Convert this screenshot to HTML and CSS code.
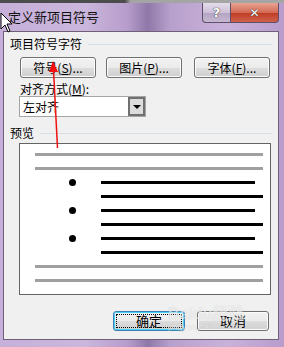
FILE: index.html
```html
<!DOCTYPE html>
<html lang="zh-CN">
  <head>
    <meta charset="UTF-8" />
    <title>定义新项目符号</title>
    <link rel="stylesheet" href="styles.css">
  </head>
  <body>
    <div class="window">
      <div class="top-strip"></div>
      <div class="titlebar">
        <span class="title">定义新项目符号</span>
        <div class="caption-btns">
          <div class="cap help">?</div>
          <div class="cap close">✕</div>
        </div>
      </div>

      <div class="client">
        <div class="group-head">
          <span>项目符号字符</span>
          <div class="rule"></div>
        </div>

        <div class="btn-row">
          <button class="btn">符号(<u>S</u>)...</button>
          <button class="btn">图片(<u>P</u>)...</button>
          <button class="btn">字体(<u>F</u>)...</button>
        </div>

        <div class="field-label">对齐方式(<u>M</u>):</div>
        <div class="select">
          <span class="select-value">左对齐</span>
          <span class="select-drop"><span class="tri"></span></span>
        </div>

        <div class="group-head preview-head">
          <span>预览</span>
          <div class="rule"></div>
        </div>

        <div class="preview">
          <div class="pline gray"></div>
          <div class="pline gray"></div>
          <div class="item">
            <span class="dot"></span>
            <div class="pline black short"></div>
          </div>
          <div class="pline black long"></div>
          <div class="item">
            <span class="dot"></span>
            <div class="pline black short"></div>
          </div>
          <div class="pline black long"></div>
          <div class="item">
            <span class="dot"></span>
            <div class="pline black short"></div>
          </div>
          <div class="pline black long"></div>
          <div class="pline gray"></div>
          <div class="pline gray"></div>
        </div>

        <div class="footer">
          <button class="btn ok"><span class="focus">确定</span></button>
          <button class="btn cancel">取消</button>
        </div>
      </div>

      <div class="watermark">
        <span class="wm-big">Baidu经验</span>
        <span class="wm-small">jingyan.baidu.com</span>
      </div>

      <svg class="cursor" width="14" height="22" viewBox="0 0 14 22">
        <polygon points="1,1 1,17 5,13 8,20 10,19 7,12 12,12" fill="#fff" stroke="#000" stroke-width="1" />
      </svg>

      <svg class="arrow" width="284" height="347" viewBox="0 0 284 347">
        <line x1="57.5" y1="148" x2="53.5" y2="70" stroke="#f01010" stroke-width="1.5" />
        <polygon points="53,61 49,72 58,72" fill="#f01010" />
      </svg>
    </div>
  </body>
</html>
```

FILE: styles.css
```css
body {
  margin: 0;
  padding: 0;
  font-family: "Noto Sans CJK SC", "Noto Sans", sans-serif;
  font-size: 12px;
  color: #000;
}

.window {
  position: relative;
  width: 284px;
  height: 347px;
  overflow: hidden;
  background: linear-gradient(90deg, #c6b0da 0%, #cbb6dc 30%, #b69ccb 45%, #8f78a8 52%, #b8a0cc 60%, #c9b2da 80%, #b89ccc 100%);
}

.top-strip {
  height: 3px;
  background: linear-gradient(90deg, #4c4c4c 0%, #4c4c4c 44%, #a5a5a5 46%, #a5a5a5 100%);
}

.titlebar {
  height: 28px;
  display: flex;
  justify-content: space-between;
  align-items: flex-start;
}

.title {
  margin: 5px 0 0 8px;
  font-size: 13px;
  line-height: 18px;
  color: #111;
}

.caption-btns {
  display: flex;
  margin-right: 5px;
}

.cap {
  height: 19px;
  display: flex;
  align-items: center;
  justify-content: center;
  color: #fff;
  font-weight: bold;
  font-family: "DejaVu Sans", sans-serif;
  border: 1px solid #5d4f6a;
  border-top: none;
  text-shadow: 0 0 1px #333, 0 0 1px #333;
}

.help {
  width: 27px;
  font-size: 13px;
  border-radius: 0 0 0 4px;
  background: linear-gradient(#e4dcea, #cdc0d8 50%, #b3a4c2 51%, #c6b8d2);
}

.close {
  width: 47px;
  font-size: 12px;
  border-left: none;
  border-radius: 0 0 4px 0;
  background: linear-gradient(#e8a494, #d36a54 50%, #bf3a24 51%, #d0624a);
}

.client {
  margin-left: 3px;
  width: 274px;
  height: 307px;
  border: 1px solid #6f6079;
  background: #f0f0f0;
  display: flex;
  flex-direction: column;
}

.group-head {
  display: flex;
  align-items: center;
  margin: 4px 6px 0 6px;
  height: 16px;
}

.group-head span {
  line-height: 16px;
}

.rule {
  flex: 1;
  height: 1px;
  background: #d5dfe5;
  margin-left: 6px;
}

.btn-row {
  display: flex;
  gap: 10px;
  margin: 5px 0 0 16px;
}

.btn {
  width: 76px;
  height: 21px;
  padding: 0;
  font-family: inherit;
  font-size: 12px;
  color: #000;
  border: 1px solid #707070;
  border-radius: 3px;
  background: linear-gradient(#f2f2f2, #ebebeb 50%, #dddddd 51%, #cfcfcf);
  box-shadow: inset 0 0 0 1px #fcfcfc;
  line-height: 17px;
}

.btn-row .btn:last-child {
  margin-left: 2px;
}

.field-label {
  margin: 4px 0 0 16px;
  line-height: 14px;
}

.select {
  display: flex;
  margin: 0 0 0 15px;
  width: 127px;
  height: 21px;
  box-sizing: border-box;
  border: 1px solid #a5a5a5;
  background: #fff;
}

.select-value {
  flex: 1;
  padding-left: 3px;
  line-height: 19px;
}

.select-drop {
  width: 17px;
  box-sizing: border-box;
  border: 2px solid #707070;
  background: #dcdcdc;
  display: flex;
  align-items: center;
  justify-content: center;
}

.tri {
  width: 0;
  height: 0;
  border-left: 4px solid transparent;
  border-right: 4px solid transparent;
  border-top: 4px solid #000;
}

.preview-head {
  margin-top: 8px;
}

.preview {
  margin: 2px 0 0 15px;
  width: 252px;
  height: 152px;
  box-sizing: border-box;
  border: 1px solid #646464;
  background: #fff;
  padding: 9px 0 0 15px;
  display: flex;
  flex-direction: column;
  gap: 11px;
}

.pline {
  height: 3px;
  width: 228px;
  flex: none;
}

.gray {
  background: #a0a0a0;
}

.black {
  background: #000;
}

.long {
  width: 162px;
  margin-left: 66px;
}

.item {
  display: flex;
  align-items: center;
  height: 3px;
}

.dot {
  width: 7px;
  height: 7px;
  border-radius: 50%;
  background: #000;
  margin-left: 34px;
  margin-right: 25px;
  flex: none;
}

.short {
  width: 154px;
}

.footer {
  display: flex;
  margin: 16px 0 0 109px;
  gap: 12px;
}

.footer .btn {
  height: 20px;
  width: 72px;
  font-size: 13px;
  line-height: 16px;
}

.ok {
  border-color: #3c7fb1;
  box-shadow: inset 0 0 0 1px #48d2f9;
}

.focus {
  display: block;
  margin: 2px;
  border: 1px dotted #000;
  line-height: 12px;
  height: 12px;
}

.watermark {
  position: absolute;
  left: 168px;
  top: 306px;
  display: flex;
  flex-direction: column;
  color: rgba(255, 255, 255, 0.55);
  text-shadow: 0 0 1px rgba(150, 150, 150, 0.35);
  pointer-events: none;
}

.wm-big {
  font-family: "Liberation Sans", "Noto Sans CJK SC", sans-serif;
  font-size: 16px;
  font-weight: bold;
  line-height: 16px;
}

.wm-small {
  font-family: "Liberation Sans", sans-serif;
  font-size: 9px;
  line-height: 10px;
}

.cursor {
  position: absolute;
  left: 0;
  top: 12px;
}

.arrow {
  position: absolute;
  left: 0;
  top: 0;
}
```
